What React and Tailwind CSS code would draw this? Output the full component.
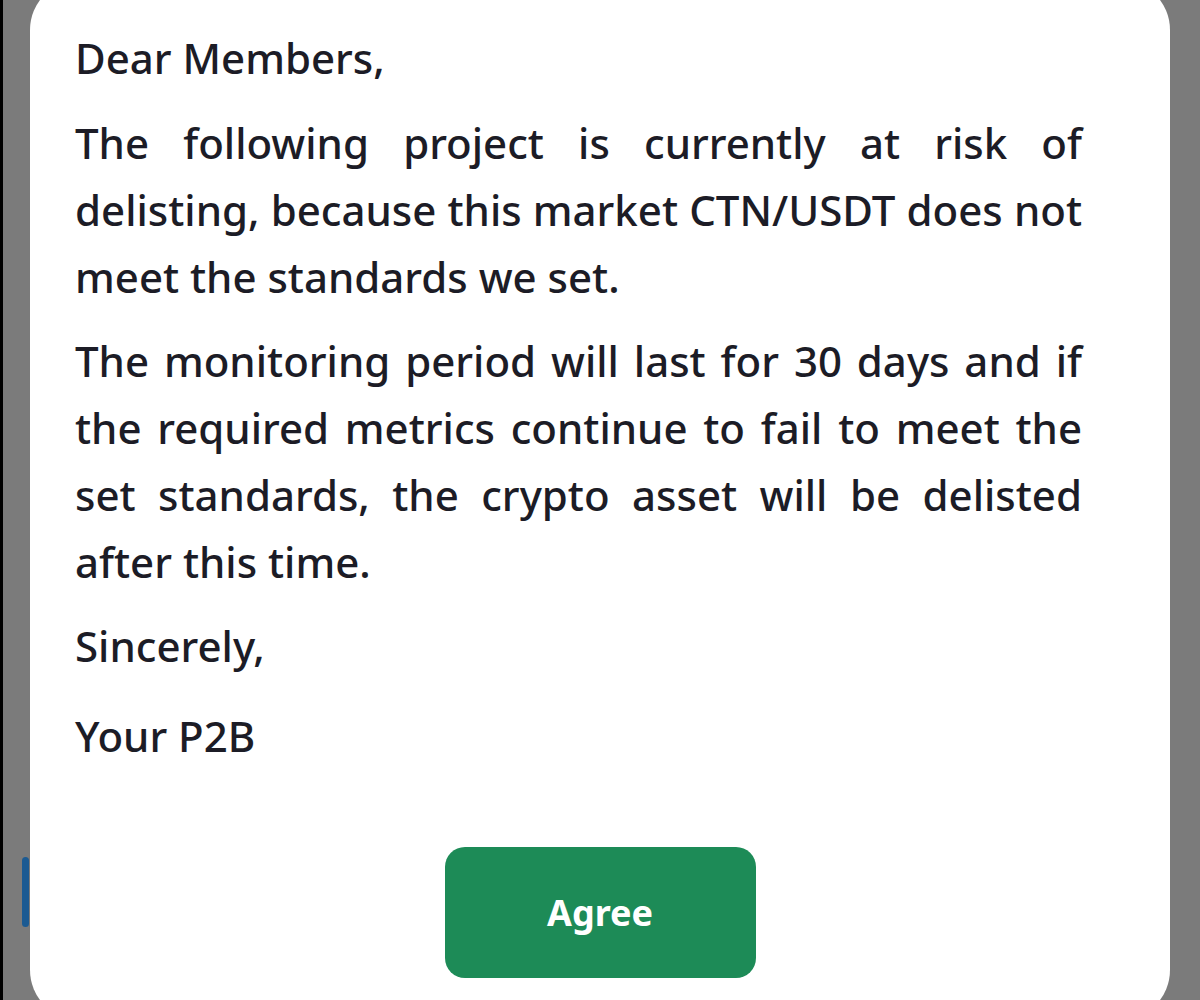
import React from 'react'

function App() {
    return (
        <div className="relative w-[1200px] h-[1000px] overflow-hidden bg-[#7b7b7b] border-l-[3px] border-black" style={{ fontFamily: '"Noto Sans", "Open Sans", sans-serif' }}>
            {/* blue edge peeking out behind the dialog */}
            <div className="absolute left-[19px] top-[857px] w-[7px] h-[70px] rounded-[4px] bg-[#1b5a92]"></div>

            <div className="relative ml-[27px] w-[1140px] h-[1040px] -mt-[20px] bg-white rounded-[50px] pt-[44px]">
                <div className="pl-[45px] w-[1052px] text-[42px] leading-[67px] font-medium text-[#1c1c26] text-justify">
                    <p>Dear Members,</p>
                    <p className="mt-[18px]">The following project is currently at risk of delisting, because this market CTN/USDT does not meet the standards we set.</p>
                    <p className="mt-[17px]">The monitoring period will last for 30 days and if the required metrics continue to fail to meet the set standards, the crypto asset will be delisted after this time.</p>
                    <p className="mt-[17px]">Sincerely,</p>
                    <p className="mt-[23px]">Your P2B</p>
                </div>
                <div className="flex justify-center mt-[78px]">
                    <button className="w-[311px] h-[131px] rounded-[20px] bg-[#1d8b57] text-white text-[36px] font-bold">
                        Agree
                    </button>
                </div>
            </div>
        </div>
    )
}

export default App
